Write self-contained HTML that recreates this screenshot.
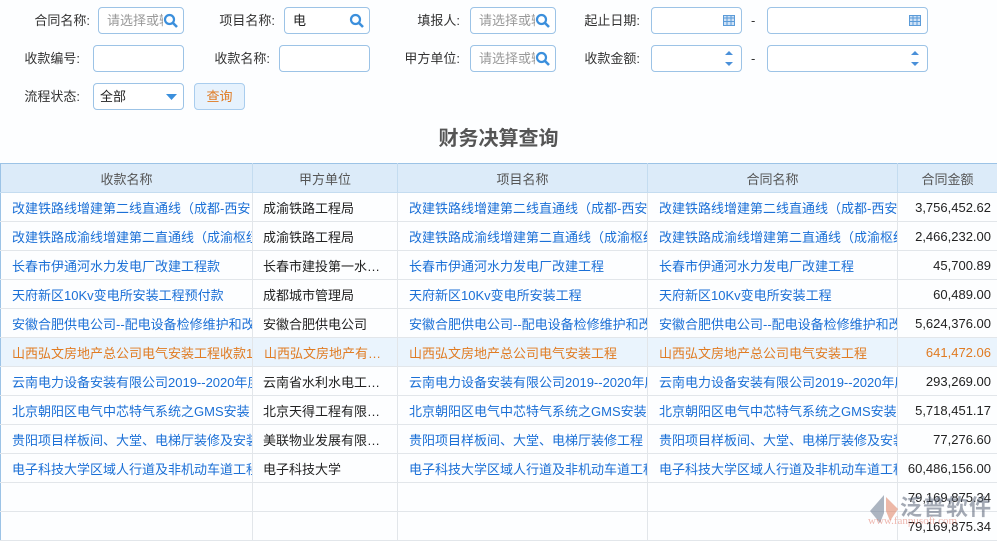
<!DOCTYPE html>
<html><head><meta charset="utf-8"><style>
*{margin:0;padding:0;box-sizing:border-box}
body{width:997px;height:536px;overflow:hidden;background:#fdfeff;font-family:"Liberation Sans","Noto Sans CJK SC",sans-serif;font-size:13px;color:#333;position:relative}
.lb{position:absolute;font-size:13px;color:#333;line-height:27px;text-align:right}
.in{position:absolute;height:27px;border:1px solid #9cc3e6;border-radius:4px;background:#fff;line-height:25px;padding-left:8px;color:#999;font-size:13px;overflow:hidden;white-space:nowrap}
.in span{display:block;width:calc(100% - 20px);overflow:hidden}
.in.v{color:#222}
.ic{position:absolute;right:4px;top:5px}
.dash{position:absolute;line-height:27px;color:#333}
.btn{position:absolute;left:194px;top:83px;width:51px;height:27px;border:1px solid #a9cdee;border-radius:4px;background:#e6f2fd;color:#e07b22;text-align:center;line-height:25px}
h1{position:absolute;top:122px;left:0;width:997px;text-align:center;font-size:20px;font-weight:bold;color:#555}
table{position:absolute;top:163px;left:0;border-collapse:collapse;table-layout:fixed;width:997px}
td,th{height:29px;border:1px solid #e2e6ea;white-space:nowrap;overflow:hidden;padding:0 0 0 11px;font-weight:normal;font-size:13px}
th{background:#dcebf9;color:#555;text-align:center;border-color:#c4dcf0;border-top:1px solid #9cc3e6;padding:0}
tr td:first-child,tr th:first-child{border-left:1px solid #9cc3e6}
td{color:#1a6fd6}
td.b{color:#222;padding-left:10px}
td.n{color:#222;text-align:right;padding:0 6px 0 0}
tr.sel td{background:#eaf4fd;color:#e07b22}
</style></head><body>
<div class="lb" style="left:20px;top:7px;width:70px">合同名称:</div>
<div class="in" style="left:98px;top:7px;width:86px"><span>请选择或输入</span><svg class="ic" width="16" height="16" viewBox="0 0 16 16"><circle cx="6.5" cy="6.5" r="4.5" fill="none" stroke="#3b8fdc" stroke-width="2.2"/><path d="M10 10l4 4" stroke="#3b8fdc" stroke-width="2.6"/></svg></div>
<div class="lb" style="left:205px;top:7px;width:70px">项目名称:</div>
<div class="in v" style="left:284px;top:7px;width:86px"><span>电</span><svg class="ic" width="16" height="16" viewBox="0 0 16 16"><circle cx="6.5" cy="6.5" r="4.5" fill="none" stroke="#3b8fdc" stroke-width="2.2"/><path d="M10 10l4 4" stroke="#3b8fdc" stroke-width="2.6"/></svg></div>
<div class="lb" style="left:390px;top:7px;width:70px">填报人:</div>
<div class="in" style="left:470px;top:7px;width:86px"><span>请选择或输入</span><svg class="ic" width="16" height="16" viewBox="0 0 16 16"><circle cx="6.5" cy="6.5" r="4.5" fill="none" stroke="#3b8fdc" stroke-width="2.2"/><path d="M10 10l4 4" stroke="#3b8fdc" stroke-width="2.6"/></svg></div>
<div class="lb" style="left:570px;top:7px;width:70px">起止日期:</div>
<div class="in" style="left:651px;top:7px;width:91px"><svg class="ic" style="right:6px;top:6px" width="12" height="12" viewBox="0 0 12 12"><rect x="0.5" y="1.5" width="11" height="10" fill="#cfe2f6" stroke="#5b9bd8"/><path d="M0 4h12M4 1.5v10M8 1.5v10M0 7.5h12" stroke="#5b9bd8"/></svg></div>
<div class="dash" style="left:751px;top:7px">-</div>
<div class="in" style="left:767px;top:7px;width:161px"><svg class="ic" style="right:6px;top:6px" width="12" height="12" viewBox="0 0 12 12"><rect x="0.5" y="1.5" width="11" height="10" fill="#cfe2f6" stroke="#5b9bd8"/><path d="M0 4h12M4 1.5v10M8 1.5v10M0 7.5h12" stroke="#5b9bd8"/></svg></div>

<div class="lb" style="left:10px;top:45px;width:70px">收款编号:</div>
<div class="in" style="left:93px;top:45px;width:91px"></div>
<div class="lb" style="left:200px;top:45px;width:70px">收款名称:</div>
<div class="in" style="left:279px;top:45px;width:91px"></div>
<div class="lb" style="left:390px;top:45px;width:70px">甲方单位:</div>
<div class="in" style="left:470px;top:45px;width:86px"><span>请选择或输入</span><svg class="ic" width="16" height="16" viewBox="0 0 16 16"><circle cx="6.5" cy="6.5" r="4.5" fill="none" stroke="#3b8fdc" stroke-width="2.2"/><path d="M10 10l4 4" stroke="#3b8fdc" stroke-width="2.6"/></svg></div>
<div class="lb" style="left:570px;top:45px;width:70px">收款金额:</div>
<div class="in" style="left:651px;top:45px;width:91px"><svg class="ic" style="right:8px;top:4px" width="8" height="17" viewBox="0 0 8 17"><path d="M0 5L4 1L8 5Z M0 12L4 16L8 12Z" fill="#4a90d9"/></svg></div>
<div class="dash" style="left:751px;top:45px">-</div>
<div class="in" style="left:767px;top:45px;width:161px"><svg class="ic" style="right:8px;top:4px" width="8" height="17" viewBox="0 0 8 17"><path d="M0 5L4 1L8 5Z M0 12L4 16L8 12Z" fill="#4a90d9"/></svg></div>

<div class="lb" style="left:10px;top:83px;width:70px">流程状态:</div>
<div class="in v" style="left:93px;top:83px;width:91px;padding-left:6px">全部<svg class="ic" style="right:6px;top:10px" width="11" height="7" viewBox="0 0 11 7"><path d="M0 0h11L5.5 6Z" fill="#3b8fdc"/></svg></div>
<div class="btn">查询</div>

<h1>财务决算查询</h1>
<table>
<colgroup><col style="width:252px"><col style="width:145px"><col style="width:250px"><col style="width:250px"><col style="width:100px"></colgroup>
<tr><th>收款名称</th><th>甲方单位</th><th>项目名称</th><th>合同名称</th><th>合同金额</th></tr>
<tr><td>改建铁路线增建第二线直通线（成都-西安</td><td class="b">成渝铁路工程局</td><td>改建铁路线增建第二线直通线（成都-西安</td><td>改建铁路线增建第二线直通线（成都-西安</td><td class="n">3,756,452.62</td></tr>
<tr><td>改建铁路成渝线增建第二直通线（成渝枢纽</td><td class="b">成渝铁路工程局</td><td>改建铁路成渝线增建第二直通线（成渝枢纽</td><td>改建铁路成渝线增建第二直通线（成渝枢纽</td><td class="n">2,466,232.00</td></tr>
<tr><td>长春市伊通河水力发电厂改建工程款</td><td class="b">长春市建投第一水…</td><td>长春市伊通河水力发电厂改建工程</td><td>长春市伊通河水力发电厂改建工程</td><td class="n">45,700.89</td></tr>
<tr><td>天府新区10Kv变电所安装工程预付款</td><td class="b">成都城市管理局</td><td>天府新区10Kv变电所安装工程</td><td>天府新区10Kv变电所安装工程</td><td class="n">60,489.00</td></tr>
<tr><td>安徽合肥供电公司--配电设备检修维护和改</td><td class="b">安徽合肥供电公司</td><td>安徽合肥供电公司--配电设备检修维护和改</td><td>安徽合肥供电公司--配电设备检修维护和改</td><td class="n">5,624,376.00</td></tr>
<tr class="sel"><td>山西弘文房地产总公司电气安装工程收款1</td><td>山西弘文房地产有…</td><td>山西弘文房地产总公司电气安装工程</td><td>山西弘文房地产总公司电气安装工程</td><td style="text-align:right;padding:0 6px 0 0">641,472.06</td></tr>
<tr><td>云南电力设备安装有限公司2019--2020年度</td><td class="b">云南省水利水电工…</td><td>云南电力设备安装有限公司2019--2020年度</td><td>云南电力设备安装有限公司2019--2020年度</td><td class="n">293,269.00</td></tr>
<tr><td>北京朝阳区电气中芯特气系统之GMS安装</td><td class="b">北京天得工程有限…</td><td>北京朝阳区电气中芯特气系统之GMS安装</td><td>北京朝阳区电气中芯特气系统之GMS安装</td><td class="n">5,718,451.17</td></tr>
<tr><td>贵阳项目样板间、大堂、电梯厅装修及安装</td><td class="b">美联物业发展有限…</td><td>贵阳项目样板间、大堂、电梯厅装修工程</td><td>贵阳项目样板间、大堂、电梯厅装修及安装</td><td class="n">77,276.60</td></tr>
<tr><td>电子科技大学区域人行道及非机动车道工程</td><td class="b">电子科技大学</td><td>电子科技大学区域人行道及非机动车道工程</td><td>电子科技大学区域人行道及非机动车道工程</td><td class="n">60,486,156.00</td></tr>
<tr><td></td><td></td><td></td><td></td><td class="n">79,169,875.34</td></tr>
<tr><td></td><td></td><td></td><td></td><td class="n">79,169,875.34</td></tr>
</table>
<div style="position:absolute;left:868px;top:490px;opacity:.55;font-size:22px;color:#5a6578;font-weight:bold;letter-spacing:1px">
<svg width="32" height="32" viewBox="0 0 32 32" style="vertical-align:middle"><path d="M16 2L2 18l10 12 4-10z" fill="#6b7a90"/><path d="M18 4l12 12-8 12-4-10z" fill="#e08060"/></svg>泛普软件</div>
<div style="position:absolute;left:868px;top:515px;opacity:.5;font-size:11px;color:#e07060;font-family:'Liberation Serif',serif">www.fanpusoft.com</div>
</body></html>
